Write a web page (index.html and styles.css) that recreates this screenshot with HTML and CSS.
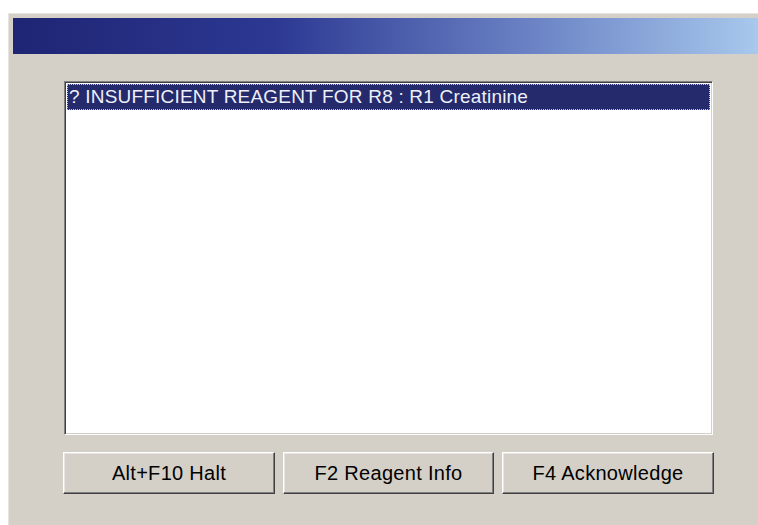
FILE: index.html
```html
<!DOCTYPE html>
<html lang="en">
<head>
<meta charset="utf-8">
<title>Alarm</title>
<link rel="stylesheet" href="styles.css">
</head>
<body>
  <div class="window">
    <div class="titlebar"></div>
    <div class="client">
      <div class="listbox">
        <div class="item selected"><span class="focus">? INSUFFICIENT REAGENT FOR R8 : R1 Creatinine</span></div>
      </div>
      <div class="buttons">
        <button class="btn wide">Alt+F10 Halt</button>
        <button class="btn">F2 Reagent Info</button>
        <button class="btn wide">F4 Acknowledge</button>
      </div>
    </div>
  </div>
</body>
</html>
```
FILE: styles.css
```css
html, body {
  margin: 0;
  height: 100%;
  background: #ffffff;
  overflow: hidden;
}

body {
  font-family: "Liberation Sans", Arial, sans-serif;
  padding-top: 13px;
  padding-left: 8px;
  box-sizing: border-box;
}

.window {
  height: 100%;
  background: #d4d0c8;
  border-top: 1px solid #e6e4df;
  border-left: 1px solid #e6e4df;
  padding: 4px 0 0 4px;
  box-sizing: border-box;
}

.titlebar {
  height: 36px;
  background: linear-gradient(to right, #1f2574 0%, #2c3892 35%, #6f88c8 72%, #a8c8ec 100%);
}

.client {
  padding: 27px 0 0 51px;
}

.listbox {
  width: 649px;
  height: 354px;
  box-sizing: border-box;
  background: #ffffff;
  border-style: solid;
  border-width: 1px;
  border-color: #808080 #ffffff #ffffff #808080;
  box-shadow: inset 1px 1px 0 #404040, inset -1px -1px 0 #d4d0c8;
  padding: 2px;
}

.item {
  height: 26px;
  font-size: 19px;
  letter-spacing: 0.2px;
  line-height: 26px;
  white-space: nowrap;
}

.item.selected {
  background: #242a6c;
  color: #eef0f8;
  outline: 1px dotted #d9c97a;
  outline-offset: -1px;
}

.focus {
  padding-left: 2px;
}

.buttons {
  display: flex;
  gap: 8px;
  margin: 17px 0 0 -1px;
}

.btn {
  width: 211px;
  height: 42px;
  padding: 0;
  margin: 0;
  font-family: "Liberation Sans", Arial, sans-serif;
  font-size: 20px;
  letter-spacing: 0.3px;
  color: #000000;
  background: #d4d0c8;
  border-style: solid;
  border-width: 1px;
  border-color: #ffffff #404040 #404040 #ffffff;
  box-shadow: inset -1px -1px 0 #808080, inset 1px 1px 0 #e8e6e2;
  box-sizing: border-box;
}

.btn.wide {
  width: 212px;
}
```
